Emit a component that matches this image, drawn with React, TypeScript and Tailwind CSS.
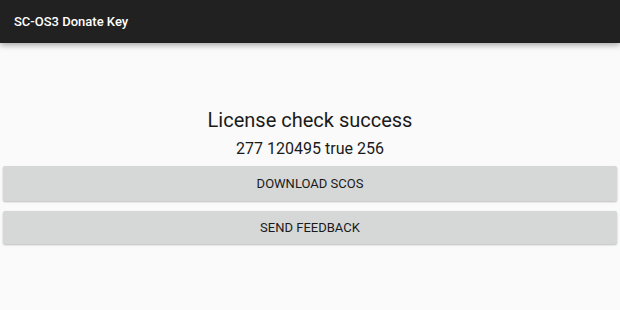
export default function App() {
  return (
    <div className="flex h-[310px] w-[620px] flex-col bg-[#fafafa] font-['Roboto',sans-serif]">
      <header className="relative z-10 flex h-[43px] shrink-0 items-center bg-[#212121] px-[14px] shadow-[0_2px_6px_rgba(0,0,0,0.35)]">
        <h1 className="text-[13px] font-medium text-white">SC-OS3 Donate Key</h1>
      </header>
      <main className="flex flex-col px-[3px] pt-[64px]">
        <p className="text-center text-[20px] leading-[26px] text-[#1a1a1a]">License check success</p>
        <p className="mt-[6px] text-center text-[16px] leading-[20px] text-[#1a1a1a]">277 120495 true 256</p>
        <button className="mt-[7px] h-[35px] rounded-[2px] bg-[#d6d7d7] text-[13px] text-[#1a1a1a] shadow-[0_1px_2px_rgba(0,0,0,0.25)]">
          DOWNLOAD SCOS
        </button>
        <button className="mt-[10px] h-[33px] rounded-[2px] bg-[#d6d7d7] text-[13px] text-[#1a1a1a] shadow-[0_1px_2px_rgba(0,0,0,0.25)]">
          SEND FEEDBACK
        </button>
      </main>
    </div>
  );
}
